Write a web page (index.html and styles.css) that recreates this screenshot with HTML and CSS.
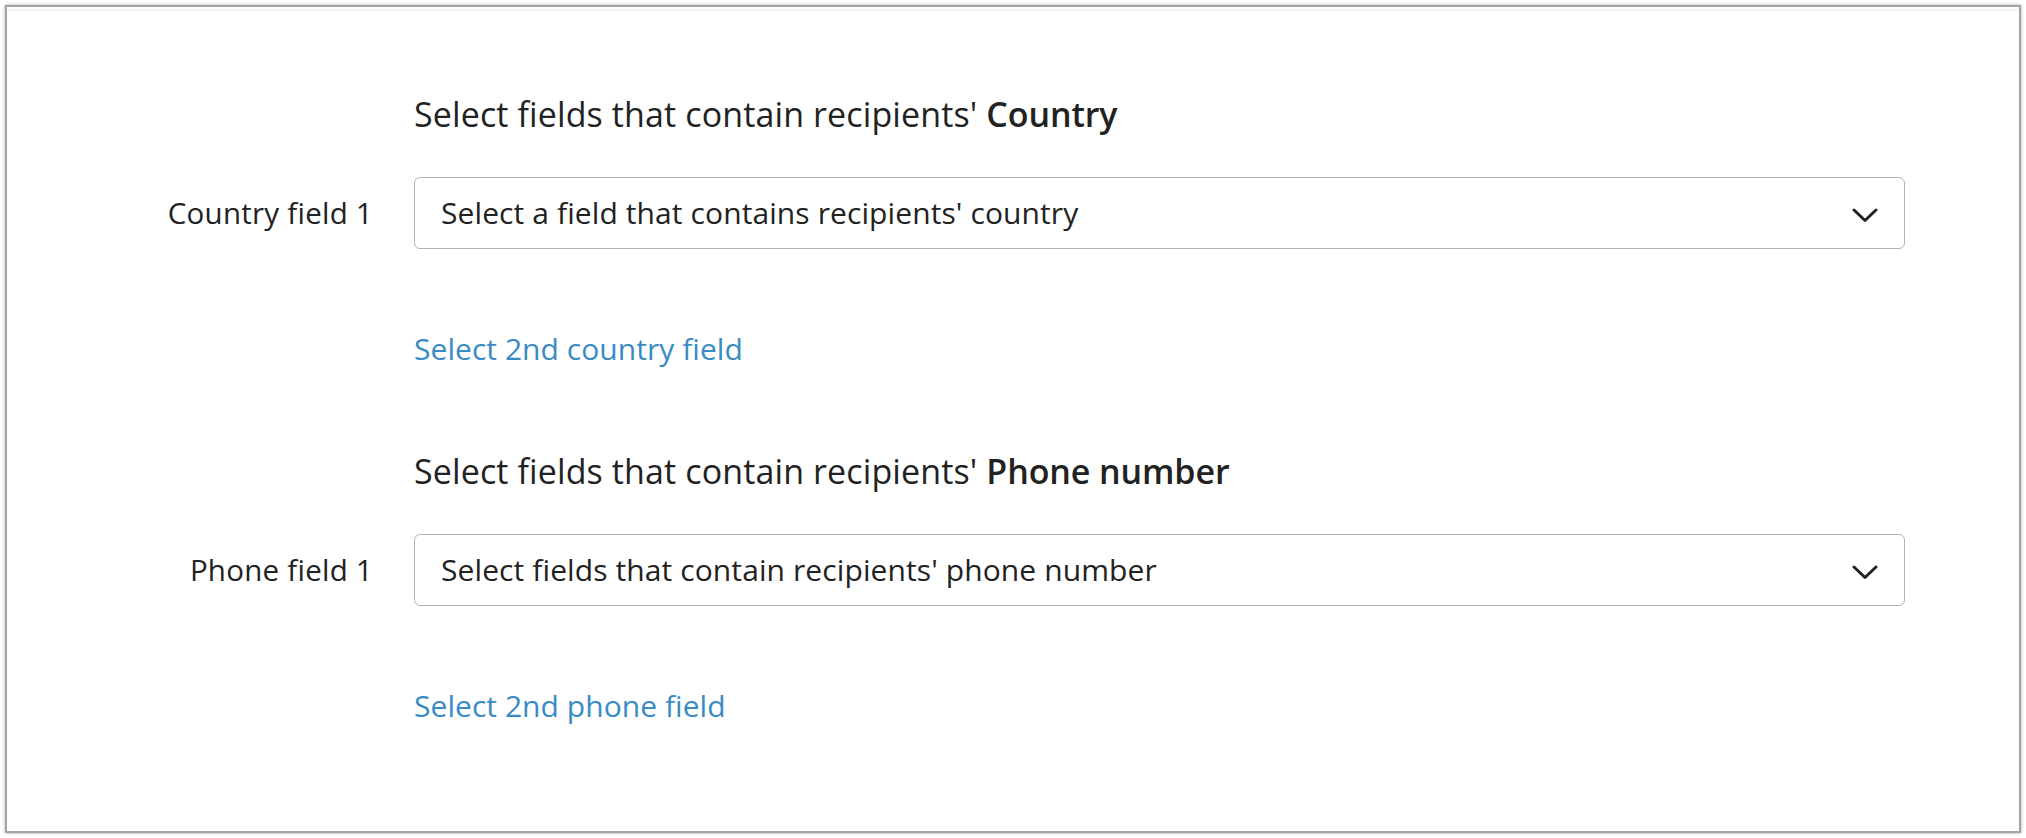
FILE: index.html
```html
<!DOCTYPE html>
<html lang="en">
<head>
<meta charset="utf-8">
<title>Recipient fields</title>
<link rel="stylesheet" href="styles.css">
</head>
<body>
<div class="frame">
  <div class="form">
    <section class="group">
      <div class="cell-empty"></div>
      <h2 class="heading">Select fields that contain recipients' <strong>Country</strong></h2>
      <label class="label">Country field 1</label>
      <div class="select">
        <span class="select-text">Select a field that contains recipients' country</span>
        <svg class="chevron" width="26" height="15" viewBox="0 0 26 15"><path d="M2 2 L13 12.5 L24 2" fill="none" stroke="#222" stroke-width="3" stroke-linecap="round" stroke-linejoin="round"/></svg>
      </div>
      <div class="cell-empty"></div>
      <a class="link" href="#">Select 2nd country field</a>
    </section>
    <section class="group">
      <div class="cell-empty"></div>
      <h2 class="heading">Select fields that contain recipients' <strong>Phone number</strong></h2>
      <label class="label">Phone field 1</label>
      <div class="select">
        <span class="select-text">Select fields that contain recipients' phone number</span>
        <svg class="chevron" width="26" height="15" viewBox="0 0 26 15"><path d="M2 2 L13 12.5 L24 2" fill="none" stroke="#222" stroke-width="3" stroke-linecap="round" stroke-linejoin="round"/></svg>
      </div>
      <div class="cell-empty"></div>
      <a class="link" href="#">Select 2nd phone field</a>
    </section>
  </div>
</div>
</body>
</html>
```
FILE: styles.css
```css
html, body {
  margin: 0;
  padding: 0;
  background: #ffffff;
}
body {
  font-family: "Open Sans", "Liberation Sans", sans-serif;
  color: #222222;
}
.frame {
  margin: 5px 5px 5px 5px;
  height: 824px;
  border: 2px solid #a4a4a4;
  box-shadow: 0 0 3px rgba(0, 0, 0, 0.35), inset 0 2px 0 #ffffff, inset 0 4px 0 #f1f5f8;
  background: #ffffff;
  box-sizing: content-box;
}
.form {
  padding-top: 84px;
  display: flex;
  flex-direction: column;
  gap: 79px;
}
.group {
  display: grid;
  grid-template-columns: 366px 1491px;
  column-gap: 41px;
  align-items: center;
}
.heading {
  margin: 0 0 40px 0;
  font-size: 34px;
  line-height: 46px;
  font-weight: 400;
  letter-spacing: 0.12px;
  color: #222;
}
.heading strong {
  font-weight: 600;
  letter-spacing: -0.1px;
}
.label {
  text-align: right;
  font-size: 29.5px;
  line-height: 40px;
  letter-spacing: 0.25px;
  color: #222;
}
.select {
  height: 72px;
  box-sizing: border-box;
  border: 1.5px solid #b3b3b3;
  border-radius: 6px;
  display: flex;
  align-items: center;
  justify-content: space-between;
  padding: 0 26px 0 26px;
  background: #fff;
}
.select-text {
  font-size: 30px;
  line-height: 40px;
  letter-spacing: 0.1px;
  color: #222;
}
.chevron {
  display: block;
  margin-top: 4px;
}
.link {
  margin-top: 80px;
  font-size: 30px;
  line-height: 40px;
  letter-spacing: 0.05px;
  color: #3a8bc4;
  text-decoration: none;
  justify-self: start;
}
```
